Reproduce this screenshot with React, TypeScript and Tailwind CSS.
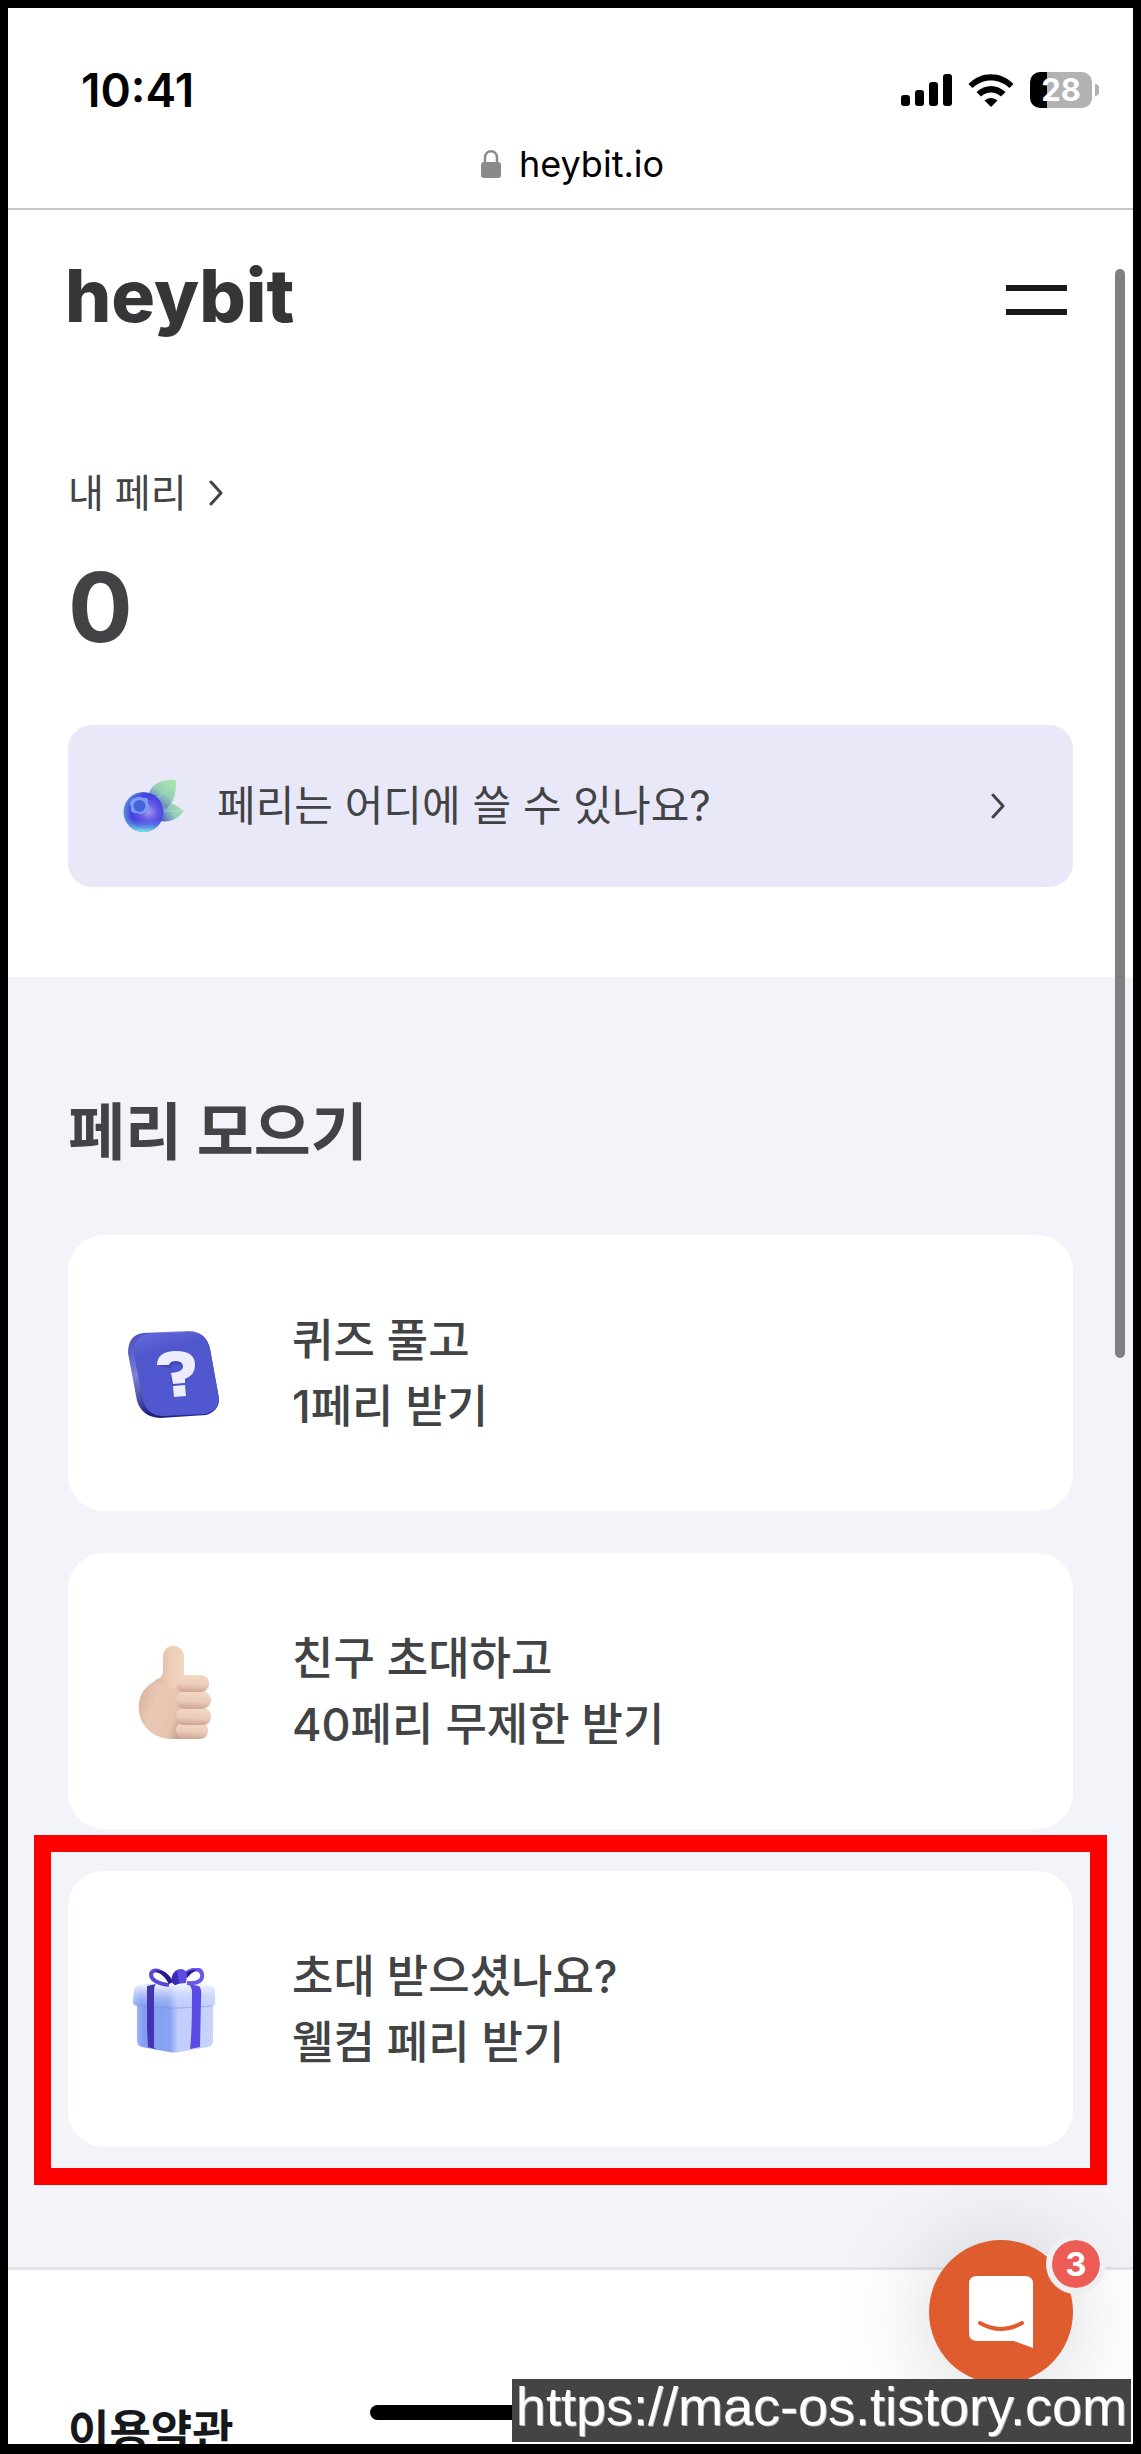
import type { ReactNode } from "react";

const BlueberryIcon = () => (
  <svg viewBox="0 0 61 53" className="h-[53px] w-[61px] shrink-0" aria-hidden="true">
    <defs>
      <linearGradient id="leafTop" x1="0.85" y1="0.1" x2="0.25" y2="0.95">
        <stop offset="0" stopColor="#a6e3b0" />
        <stop offset="0.45" stopColor="#95d0b5" />
        <stop offset="1" stopColor="#4c68c0" />
      </linearGradient>
      <linearGradient id="leafSide" x1="1" y1="0.3" x2="0" y2="0.8">
        <stop offset="0" stopColor="#a9e6b0" />
        <stop offset="0.5" stopColor="#8fc9ba" />
        <stop offset="1" stopColor="#4a62c0" />
      </linearGradient>
      <radialGradient id="berry" cx="0.63" cy="0.5" r="0.62">
        <stop offset="0" stopColor="#a39be8" />
        <stop offset="0.35" stopColor="#6458e6" />
        <stop offset="0.7" stopColor="#4340e0" />
        <stop offset="1" stopColor="#5a8fd8" />
      </radialGradient>
      <linearGradient id="berryGlow" x1="0" y1="0" x2="0" y2="1">
        <stop offset="0.68" stopColor="#4c7df0" stopOpacity="0" />
        <stop offset="1" stopColor="#7df0e0" />
      </linearGradient>
    </defs>
    <path d="M39 25C49 19 56 28 61 31C56 38 47 43 37 41Z" fill="url(#leafSide)" />
    <path d="M40 31L60 31" stroke="#b4e8c4" strokeOpacity="0.5" />
    <path d="M26 13C31 1 41 0 51 0Q53 0 53 2C53 14 51 24 42 29C36 20 32 15 26 13Z" fill="url(#leafTop)" />
    <path d="M34 18C40 15 45 9 49 4" stroke="#b4e8c4" strokeOpacity="0.5" fill="none" />
    <circle cx="20.500" cy="32" r="20" fill="url(#berry)" />
    <circle cx="20.500" cy="32" r="20" fill="url(#berryGlow)" />
    <path
      d="M12 18Q16 15 20 18Q26 17 25 23Q29 28 23 31Q19 36 14 33Q7 34 8 27Q5 20 12 18Z"
      fill="#7a9cf6"
    />
    <circle cx="16.500" cy="26" r="6" fill="#4663dc" />
  </svg>
);

const QuizIcon = () => (
  <svg viewBox="0 0 92 88" className="h-[88px] w-[92px]" aria-hidden="true">
    <defs>
      <linearGradient id="tile" x1="0.2" y1="0" x2="0.5" y2="1">
        <stop offset="0" stopColor="#6266da" />
        <stop offset="0.25" stopColor="#5056cb" />
        <stop offset="1" stopColor="#5157d0" />
      </linearGradient>
      <linearGradient id="tileEdge" x1="0" y1="0" x2="1" y2="1">
        <stop offset="0" stopColor="#4045b8" />
        <stop offset="0.3" stopColor="#7d82d8" />
        <stop offset="0.6" stopColor="#1c1f7c" />
        <stop offset="1" stopColor="#262a96" />
      </linearGradient>
    </defs>
    <path d="M15 3L60 1Q78 1 82 19L91 69Q91 81 78 85L32 88Q14 87 9 71L0 23Q0 5 15 3Z" fill="url(#tileEdge)" />
    <path d="M20 4L62 2Q78 2 82 19L91 68Q91 81 77 84L34 86Q19 85 15 70L6 25Q5 7 20 4Z" fill="url(#tile)" />
    <path
      d="M32 36Q32 25 49 24Q66 24 66 36Q67 46 56 50V54L44 55L43 45Q54 44 54 39Q54 34 48 34Q43 34 43 38Z"
      fill="#292d91"
      opacity="0.35"
    />
    <path
      d="M29 35Q29 22 46 21Q67 20 67 35Q67 45 57 49V53L45 54L43 43Q55 42 55 37Q55 31 48 31Q42 31 41 35Z"
      fill="#eeedfd"
    />
    <path d="M45 56L57 55L58 66L46 67Z" fill="#eeedfd" />
  </svg>
);

const ThumbIcon = () => (
  <svg viewBox="0 0 73 93" className="h-[93px] w-[73px]" aria-hidden="true">
    <defs>
      <linearGradient id="skin" x1="0" y1="0.2" x2="1" y2="0.6">
        <stop offset="0" stopColor="#d9ae9b" />
        <stop offset="0.35" stopColor="#eac9b4" />
        <stop offset="0.75" stopColor="#e6c3ae" />
        <stop offset="1" stopColor="#bb9183" />
      </linearGradient>
      <linearGradient id="thumb" x1="0" y1="0" x2="1" y2="0">
        <stop offset="0" stopColor="#ddb7a3" />
        <stop offset="0.5" stopColor="#ecccb6" />
        <stop offset="1" stopColor="#f1d6c0" />
      </linearGradient>
      <linearGradient id="finger" x1="0.3" y1="0" x2="0.2" y2="1">
        <stop offset="0" stopColor="#f3d9c4" />
        <stop offset="0.55" stopColor="#ebcbb8" />
        <stop offset="1" stopColor="#cda196" />
      </linearGradient>
    </defs>
    <path d="M25 28C24 34 8 35 2 52C-4 72 10 93 34 93H52V30H25Z" fill="url(#skin)" />
    <path d="M25 11C25 -4 46 -4 46 11V36C40 46 26 44 17 34C25 32 25 28 25 20Z" fill="url(#thumb)" />
    <rect x="38" y="76" width="32" height="17" rx="8" fill="url(#finger)" />
    <rect x="38" y="62" width="35" height="17" rx="8" fill="url(#finger)" />
    <rect x="38" y="45" width="35" height="18" rx="9" fill="url(#finger)" />
    <rect x="38" y="29" width="33" height="17" rx="8" fill="url(#finger)" />
  </svg>
);

const GiftIcon = () => (
  <svg viewBox="0 0 83 85" className="h-[85px] w-[83px]" aria-hidden="true">
    <defs>
      <linearGradient id="boxBody" x1="0" y1="0" x2="1" y2="0">
        <stop offset="0" stopColor="#9db4f7" />
        <stop offset="0.1" stopColor="#819cf0" />
        <stop offset="0.44" stopColor="#8aa3f3" />
        <stop offset="0.54" stopColor="#c0cefb" />
        <stop offset="1" stopColor="#c9d3fc" />
      </linearGradient>
      <linearGradient id="boxLid" x1="0" y1="0" x2="0" y2="1">
        <stop offset="0.05" stopColor="#f3f6ff" />
        <stop offset="0.45" stopColor="#dfe6fe" stopOpacity="0.5" />
        <stop offset="1" stopColor="#b8c6fb" stopOpacity="0" />
      </linearGradient>
    </defs>
    <path d="M4 34H80V73Q80 78 75 79L46 84Q41 85 36 84L9 79Q4 78 4 73Z" fill="url(#boxBody)" />
    <path d="M1 22Q2 18 8 17L36 15L75 17Q81 18 82 22V35Q82 38 78 38L46 40H37L4 38Q0 37 0 34Z" fill="url(#boxBody)" />
    <path d="M1 22Q2 18 8 17L36 15L75 17Q81 18 82 22V35Q82 38 78 38L46 40H37L4 38Q0 37 0 34Z" fill="url(#boxLid)" />
    <path d="M4 38L37 40H46L80 38" stroke="#8495d5" strokeOpacity="0.6" fill="none" />
    <path d="M14 18L23 16Q21 18 21 23V80L25 82L15 79L14 60Z" fill="#4234b0" />
    <path d="M55 16L66 18Q69 21 68 30L67 79L57 81Q59 65 59 25Q59 18 55 16Z" fill="#594be4" />
    <path d="M36 17C28 16 18 13 18 6C20 -1 32 3 38 14" stroke="#5548d8" strokeWidth="4" fill="none" />
    <path d="M54 15C66 16 70 12 69 6C67 -2 57 2 52 6" stroke="#6658ea" strokeWidth="4" fill="none" />
    <path d="M22 3C30 1 36 6 40 14L36 16C32 9 28 5 22 3Z" fill="#2a1b8c" />
    <path d="M52 6Q58 1 63 2Q57 6 54 10Z" fill="#2a1b8c" />
    <path d="M40 6Q42 1 49 1Q55 3 54 8L53 15Q48 15 42 17Q37 15 40 6Z" fill="#594be4" />
    <path d="M40 6L44 3L46 15L42 17Q36 14 40 6Z" fill="#3a2ab8" />
  </svg>
);

const Chevron = () => (
  <svg viewBox="0 0 14 26" className="h-[26px] w-[14px] shrink-0" fill="none" stroke="#414345" strokeWidth="3" strokeLinecap="round" strokeLinejoin="round" aria-hidden="true">
    <path d="M2 2L12 13L2 24" />
  </svg>
);

const StatusBar = () => (
  <div className="flex h-[60px] items-center justify-between pl-[73px] pr-[34px]">
    <span className="text-[46px] font-semibold leading-[60px] text-black">10:41</span>
    <div className="flex items-center gap-4">
      <svg viewBox="0 0 51 32" className="h-8 w-[51px]" aria-hidden="true">
        <rect x="0" y="21" width="9" height="11" rx="3" />
        <rect x="14" y="16" width="9" height="16" rx="3" />
        <rect x="28" y="8" width="9" height="24" rx="3" />
        <rect x="42" y="0" width="9" height="32" rx="3" />
      </svg>
      <svg viewBox="0 0 46 33" className="h-[33px] w-[46px]" aria-hidden="true">
        <path d="M0.500 10C13 -3 33 -3 45.500 10L41.500 14C31 4 15 4 4.500 14Z" />
        <path d="M8.500 18C17 10 29 10 37.500 18L33 22.500C27 17 19 17 13 22.500Z" />
        <path d="M16.500 26.500C20 23 26 23 29.500 26.500L23 33Z" />
      </svg>
      <div className="flex items-center gap-[3px]">
        <div className="flex h-9 w-[62px] items-center justify-center rounded-[10px] bg-[linear-gradient(to_right,#000_17px,#b2b2b2_17px)] text-[31px] font-bold leading-9 text-white">
          28
        </div>
        <div className="h-3 w-1 rounded-r-full bg-[#b2b2b2]" />
      </div>
    </div>
  </div>
);

const AddressBar = () => (
  <div className="flex h-[90px] items-center justify-center gap-[18px] border-b-2 border-[#c8c8c8] pl-11 pr-10">
    <svg viewBox="0 0 20 28" className="h-7 w-5" aria-hidden="true">
      <path d="M4 13V8C4 -1 16 -1 16 8V13" fill="none" stroke="#8a8a8d" strokeWidth="2.500" />
      <rect x="0" y="12" width="20" height="16" rx="3" fill="#8a8a8d" />
    </svg>
    <span className="text-[36px] leading-[48px] text-black">heybit.io</span>
  </div>
);

const missions = [
  { icon: <QuizIcon />, lines: ["퀴즈 풀고", "1페리 받기"], highlighted: false },
  { icon: <ThumbIcon />, lines: ["친구 초대하고", "40페리 무제한 받기"], highlighted: false },
  { icon: <GiftIcon />, lines: ["초대 받으셨나요?", "웰컴 페리 받기"], highlighted: true },
];

const MissionCard = ({ icon, lines, highlighted }: { icon: ReactNode; lines: string[]; highlighted: boolean }) => (
  <div className="relative">
    <a href="#mission" className="flex items-center rounded-[36px] bg-white pb-[71px] pl-[54px] pr-10 pt-[73px]">
      <span className="flex w-[104px] shrink-0 justify-center">{icon}</span>
      <span className="ml-[66px] text-[45px] font-medium leading-[66px]">
        {lines.map((line) => (
          <span key={line} className="block">{line}</span>
        ))}
      </span>
    </a>
    {highlighted && (
      <div className="pointer-events-none absolute -inset-x-[34px] -bottom-[38px] -top-9 border-[17px] border-[#ff0000]" />
    )}
  </div>
);

const ChatLauncher = () => (
  <button type="button" aria-label="채팅 열기" className="absolute bottom-[60px] right-[60px] size-36 rounded-full bg-[#df5c2e] shadow-[0_6px_100px_rgba(0,0,0,0.18)]">
    <svg viewBox="0 0 64 72" className="mx-auto h-[72px] w-16" aria-hidden="true">
      <path d="M8 0H56Q64 0 64 8V72L45 65H8Q0 65 0 57V8Q0 0 8 0Z" fill="#fff" />
      <path d="M11 47Q32 59 53 47" fill="none" stroke="#df5c2e" strokeWidth="4" strokeLinecap="round" />
    </svg>
    <span className="absolute -right-[33px] -top-1.5 flex size-[60px] items-center justify-center rounded-full border-[6px] border-[#efeff1] bg-[#ec5b54] bg-clip-padding text-[33px] font-bold leading-none text-white">
      3
    </span>
  </button>
);

export default function App() {
  return (
    <div className="relative h-screen overflow-hidden border-8 border-b-10 border-black bg-white font-['Inter','Noto_Sans_CJK_KR',sans-serif] text-[#414345]">
      <div className="pt-[52px]">
        <StatusBar />
        <AddressBar />
      </div>

      <header className="flex h-[179px] items-center justify-between pl-[57px] pr-[66px]">
        <a href="#home" className="pb-2 text-[73px] font-extrabold leading-[72px] text-[#353638]">heybit</a>
        <button type="button" aria-label="메뉴" className="flex w-[61px] flex-col gap-[18px]">
          <span className="h-1.5 bg-[#16181b]" />
          <span className="h-1.5 bg-[#16181b]" />
        </button>
      </header>

      <main>
        <section className="px-15 pb-[90px] pt-[74px]">
          <a href="#peri" className="flex items-center gap-[22px] text-[39px] leading-[60px]">
            내 페리
            <Chevron />
          </a>
          <p className="mt-9 text-[96px] font-bold leading-[96px]">0</p>
          <a href="#guide" className="mt-[70px] flex h-[162px] items-center rounded-3xl bg-[#e9e8f8] pl-[55px] pr-[68px] text-[42px]">
            <BlueberryIcon />
            <span className="ml-[33px] grow leading-[60px]">페리는 어디에 쓸 수 있나요?</span>
            <Chevron />
          </a>
        </section>

        <section className="border-b-[3px] border-[#e3e5ea] bg-[#f3f4f9] px-15 py-30">
          <h1 className="text-[62px] font-bold leading-[72px]">페리 모으기</h1>
          <div className="mt-[66px] flex flex-col gap-[42px]">
            {missions.map((mission) => (
              <MissionCard key={mission.lines[0]} {...mission} />
            ))}
          </div>
        </section>
      </main>

      <footer className="px-15 pt-[132px]">
        <a href="#terms" className="text-[45px] font-bold leading-[60px] text-[#16181b]">이용약관</a>
      </footer>

      {/* Floating layers */}
      <div className="absolute right-2 top-[261px] h-[1089px] w-2.5 rounded-full bg-[#808080]" />
      <ChatLauncher />
      <div className="absolute bottom-6 left-1/2 h-[15px] w-[402px] -translate-x-1/2 rounded-full bg-black" />
      <div className="absolute bottom-0.5 right-0.5 h-[63px] bg-[#444] px-1 font-['Liberation_Sans',sans-serif] text-[54px] leading-[54px] text-white [text-shadow:1px_1px_0_#bbb]">
        https://mac-os.tistory.com
      </div>
    </div>
  );
}
